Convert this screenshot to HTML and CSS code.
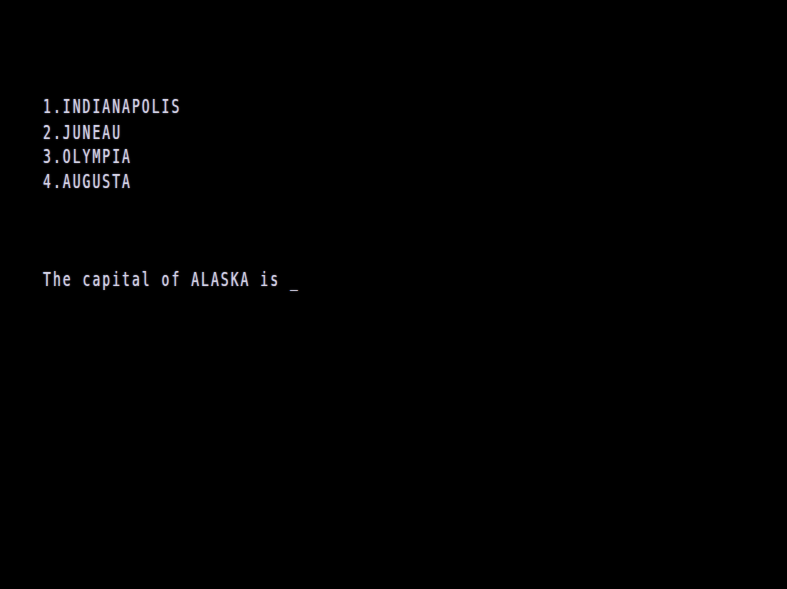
FILE: index.html
```html
<!DOCTYPE html>
<html>
<head>
<meta charset="utf-8">
<link rel="stylesheet" href="styles.css">
</head>
<body>
<div class="screen">
  <div class="text">
    <div class="line">1.INDIANAPOLIS</div>
    <div class="line">2.JUNEAU</div>
    <div class="line">3.OLYMPIA</div>
    <div class="line">4.AUGUSTA</div>
    <div class="line question">The capital of ALASKA is <span class="cursor">_</span></div>
  </div>
</div>
</body>
</html>
```
FILE: styles.css
```css
html, body {
  margin: 0;
  padding: 0;
  background: #000;
}
.screen {
  width: 787px;
  height: 589px;
  background: #000;
  overflow: hidden;
  padding: 95px 0 0 43px;
  box-sizing: border-box;
}
.text {
  font-family: "DejaVu Sans Mono", monospace;
  font-size: 13px;
  letter-spacing: 2.05px;
  line-height: 16.67px;
  color: #d4d2e6;
  transform: scaleY(1.5);
  transform-origin: 0 0;
  text-shadow: 0 0 1.2px rgba(200, 198, 224, 0.8);
}
.line {
  white-space: pre;
}
.question {
  margin-top: 48.6px;
}
```
